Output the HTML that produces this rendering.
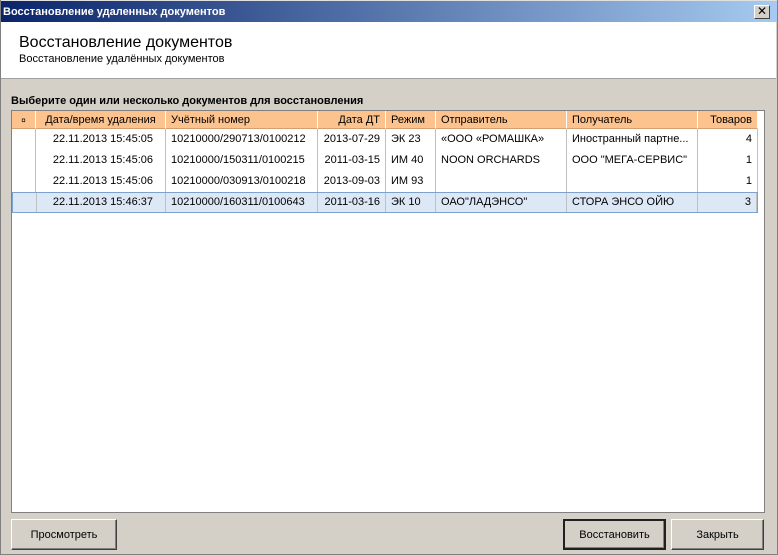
<!DOCTYPE html>
<html><head><meta charset="utf-8"><style>
*{margin:0;padding:0;box-sizing:border-box}
body{width:778px;height:555px;background:#d4d0c8;font-family:"Liberation Sans","DejaVu Sans",sans-serif;font-size:11px;color:#000;position:relative;overflow:hidden}
.title{position:absolute;left:0;top:0;width:778px;height:22px;background:linear-gradient(90deg,#0a246a,#a6caf0);color:#fff;font-weight:bold;font-size:11px;line-height:22px;padding-left:3px;border-top:1px solid #e0e0e0}
.x{position:absolute;right:8px;top:4px;width:16px;height:14px;background:#d4d0c8;border:1px solid;border-color:#fff #404040 #404040 #fff;font-size:12px;line-height:11px;text-align:center;color:#000;font-weight:bold}
.hdr{position:absolute;left:0;top:22px;width:776px;height:57px;background:#fff;border-bottom:1px solid #a0a0a0}
.hdr h1{position:absolute;left:19px;top:12px;font-size:16px;font-weight:normal}
.hdr p{position:absolute;left:19px;top:31px;font-size:11px}
.lbl{position:absolute;left:11px;top:95px;font-weight:bold}
.grid{position:absolute;left:11px;top:110px;width:754px;height:403px;background:#fff;border:1px solid #808080}
.row{position:absolute;left:0;height:21px;width:746px}
.c{position:absolute;top:0;height:100%;line-height:21px;padding:0 5px;white-space:nowrap;overflow:hidden;border-right:1px solid #c0c0c0}
.h .c{background:#fcc38f;line-height:19px;border-right:1px solid #fff;border-bottom:1px solid #d0a070}
.r{text-align:right}
.sel{background:#dde8f7;border:1px solid #7da2ce}
.btn{position:absolute;top:519px;height:31px;background:#d4d0c8;border:1px solid;border-color:#fff #404040 #404040 #fff;box-shadow:inset -1px -1px #808080;text-align:center;line-height:31px;font-size:11px}
.btn.d{border:2px solid #000;border-color:#202020;line-height:28px}
.frame{position:absolute;left:0;top:0;width:778px;height:555px;border:1px solid #808080;border-top:none;pointer-events:none}
</style></head><body>
<div class="title">Восстановление удаленных документов<div class="x">✕</div></div>
<div class="hdr"><h1>Восстановление документов</h1><p>Восстановление удалённых документов</p></div>
<div class="lbl">Выберите один или несколько документов для восстановления</div>
<div class="grid">
<div class="row h" style="top:0;height:18px">
<div class="c" style="left:0;width:24px;font-size:8px;text-align:center">¤</div>
<div class="c" style="left:24px;width:130px;text-align:center">Дата/время удаления</div>
<div class="c" style="left:154px;width:152px">Учётный номер</div>
<div class="c r" style="left:306px;width:68px">Дата ДТ</div>
<div class="c" style="left:374px;width:50px">Режим</div>
<div class="c" style="left:424px;width:131px">Отправитель</div>
<div class="c" style="left:555px;width:131px">Получатель</div>
<div class="c r" style="left:686px;width:60px">Товаров</div>
</div>
<div class="row" style="top:18px">
<div class="c" style="left:0;width:24px"></div><div class="c r" style="left:24px;width:130px;padding-right:12px">22.11.2013 15:45:05</div><div class="c" style="left:154px;width:152px">10210000/290713/0100212</div><div class="c r" style="left:306px;width:68px">2013-07-29</div><div class="c" style="left:374px;width:50px">ЭК 23</div><div class="c" style="left:424px;width:131px">«ООО «РОМАШКА»</div><div class="c" style="left:555px;width:131px">Иностранный партне...</div><div class="c r" style="left:686px;width:60px">4</div></div>
<div class="row" style="top:39px">
<div class="c" style="left:0;width:24px"></div><div class="c r" style="left:24px;width:130px;padding-right:12px">22.11.2013 15:45:06</div><div class="c" style="left:154px;width:152px">10210000/150311/0100215</div><div class="c r" style="left:306px;width:68px">2011-03-15</div><div class="c" style="left:374px;width:50px">ИМ 40</div><div class="c" style="left:424px;width:131px">NOON ORCHARDS</div><div class="c" style="left:555px;width:131px">ООО "МЕГА-СЕРВИС"</div><div class="c r" style="left:686px;width:60px">1</div></div>
<div class="row" style="top:60px">
<div class="c" style="left:0;width:24px"></div><div class="c r" style="left:24px;width:130px;padding-right:12px">22.11.2013 15:45:06</div><div class="c" style="left:154px;width:152px">10210000/030913/0100218</div><div class="c r" style="left:306px;width:68px">2013-09-03</div><div class="c" style="left:374px;width:50px">ИМ 93</div><div class="c" style="left:424px;width:131px"></div><div class="c" style="left:555px;width:131px"></div><div class="c r" style="left:686px;width:60px">1</div></div>
<div class="row sel" style="top:81px">
<div class="c" style="left:0;width:24px;height:19px"></div><div class="c r" style="left:23px;width:130px;padding-right:12px;line-height:19px">22.11.2013 15:46:37</div><div class="c" style="left:153px;width:152px;line-height:19px">10210000/160311/0100643</div><div class="c r" style="left:305px;width:68px;line-height:19px">2011-03-16</div><div class="c" style="left:373px;width:50px;line-height:19px">ЭК 10</div><div class="c" style="left:423px;width:131px;line-height:19px">ОАО"ЛАДЭНСО"</div><div class="c" style="left:554px;width:131px;line-height:19px">СТОРА ЭНСО ОЙЮ</div><div class="c r" style="left:685px;width:59px;line-height:19px">3</div></div>
</div>
<div class="btn" style="left:11px;width:106px">Просмотреть</div>
<div class="btn d" style="left:563px;width:103px">Восстановить</div>
<div class="btn" style="left:671px;width:93px">Закрыть</div>
<div class="frame"></div>
</body></html>
